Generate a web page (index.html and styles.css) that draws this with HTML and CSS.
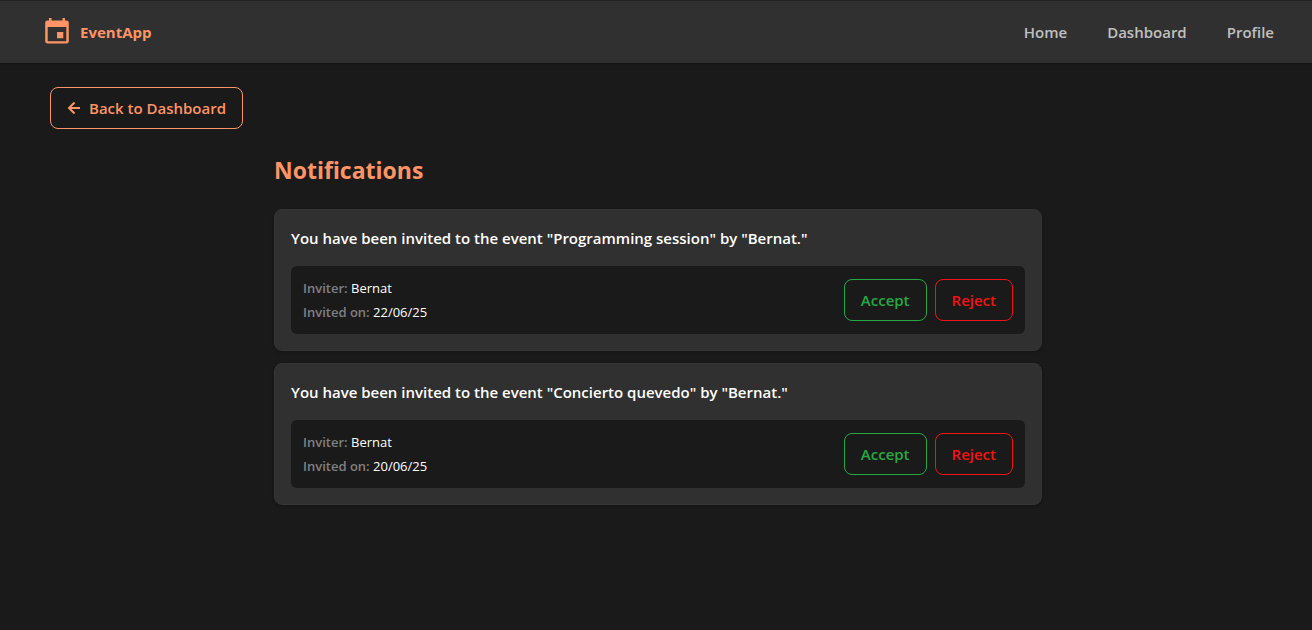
FILE: index.html
```html
<!DOCTYPE html>
<html lang="en">
<head>
<meta charset="utf-8">
<meta name="viewport" content="width=device-width, initial-scale=1">
<title>EventApp - Notifications</title>
<link rel="stylesheet" href="styles.css">
</head>
<body>
<header class="navbar">
  <a class="brand" href="#">
    <svg class="brand-icon" viewBox="0 0 30 32" aria-hidden="true"><path fill-rule="evenodd" d="M7 2h2.500v2.500h11V2H23v2.500h1.500A2.300 2.300 0 0 1 26.800 6.800v18.500a2.300 2.300 0 0 1-2.300 2.300h-19a2.300 2.300 0 0 1-2.300-2.300V6.800a2.300 2.300 0 0 1 2.300-2.300H7zM5.700 11v14.200h18.600V11zM15 16h6.300v6.300H15z"/></svg>
    <span>EventApp</span>
  </a>
  <nav class="nav-links">
    <a href="#">Home</a>
    <a href="#">Dashboard</a>
    <a href="#">Profile</a>
  </nav>
</header>
<main class="page">
  <a class="btn btn-back" href="#">
    <svg class="arrow" viewBox="0 0 14 14" aria-hidden="true"><path d="M13 7H2M7.500 1.500L2 7l5.500 5.500"/></svg>
    <span>Back to Dashboard</span>
  </a>
  <section class="notifications">
    <h1>Notifications</h1>
    <ul class="list">
      <li class="card">
        <h2>You have been invited to the event "Programming session" by "Bernat."</h2>
        <div class="invite">
          <div class="details">
            <p><span class="label">Inviter:</span> Bernat</p>
            <p><span class="label">Invited on:</span> 22/06/25</p>
          </div>
          <div class="actions">
            <button class="btn btn-accept" type="button">Accept</button>
            <button class="btn btn-reject" type="button">Reject</button>
          </div>
        </div>
      </li>
      <li class="card">
        <h2>You have been invited to the event "Concierto quevedo" by "Bernat."</h2>
        <div class="invite">
          <div class="details">
            <p><span class="label">Inviter:</span> Bernat</p>
            <p><span class="label">Invited on:</span> 20/06/25</p>
          </div>
          <div class="actions">
            <button class="btn btn-accept" type="button">Accept</button>
            <button class="btn btn-reject" type="button">Reject</button>
          </div>
        </div>
      </li>
    </ul>
  </section>
</main>
</body>
</html>
```

FILE: styles.css
```css
* { box-sizing: border-box; margin: 0; padding: 0; }
body {
  background: #1a1a1a;
  color: #fff;
  font-family: "Open Sans", "Noto Sans", sans-serif;
  font-size: 15px;
  line-height: 24px;
}
a { color: inherit; text-decoration: none; }
.navbar {
  display: flex;
  align-items: center;
  justify-content: space-between;
  padding: 15px 38px 15px 42px;
  background: #303030;
  border-top: 1px solid #222;
  box-shadow: 0 1px 2px rgba(0, 0, 0, 0.3);
}
.brand { display: flex; align-items: center; gap: 8px; color: #ff9466; font-weight: 700; }
.brand-icon { width: 30px; height: 32px; fill: currentColor; }
.nav-links { display: flex; gap: 40px; color: #c0c0c0; font-weight: 600; }
.page { padding: 24px 46px 24px 50px; }
.btn {
  display: inline-flex;
  align-items: center;
  justify-content: center;
  padding: 8px 16px;
  border: 1px solid currentColor;
  border-radius: 8px;
  background: transparent;
  font: inherit;
  font-weight: 600;
}
.btn-back { gap: 8px; color: #ff9466; }
.arrow { width: 14px; height: 14px; fill: none; stroke: currentColor; stroke-width: 2; }
.notifications { max-width: 768px; margin: 25px auto 0; }
h1 { color: #ff9466; font-size: 23px; line-height: 32px; font-weight: 700; }
.list { display: grid; gap: 12px; margin-top: 23px; list-style: none; }
.card {
  padding: 16px;
  background: #303030;
  border: 1px solid #353535;
  border-radius: 8px;
  box-shadow: 0 1px 3px rgba(0, 0, 0, 0.3);
}
h2 { margin-bottom: 16px; font-size: 15px; line-height: 24px; font-weight: 600; }
.invite {
  display: flex;
  align-items: center;
  justify-content: space-between;
  padding: 10px 12px;
  background: #1a1a1a;
  border-radius: 6px;
}
.details { font-size: 13px; line-height: 24px; }
.label { color: #808080; font-weight: 600; }
.actions { display: flex; gap: 8px; }
.btn-accept { color: #28a745; }
.btn-reject { color: #f01414; }
```
